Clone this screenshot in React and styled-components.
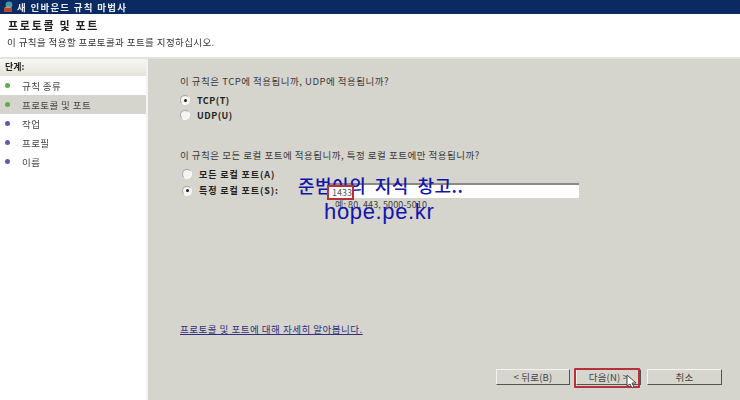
import React from 'react';
import styled, { createGlobalStyle } from 'styled-components';

const Global = createGlobalStyle`
  html, body { margin: 0; padding: 0; background: #fff; }
  body { font-family: "Noto Sans CJK KR", "Liberation Sans", sans-serif; font-size: 9px; color: #2c2c2c; }
`;

const Wizard = styled.div`
  width: 740px;
  height: 400px;
  display: flex;
  flex-direction: column;
  overflow: hidden;
  filter: blur(0.35px);
`;

const TitleBar = styled.div`
  height: 14px;
  background: #0c2a62;
  color: #e8ecf4;
  display: flex;
  align-items: center;
  gap: 3px;
  padding-left: 3px;
  font-size: 9.5px;
  font-weight: 700;
  letter-spacing: 1.25px;
`;

const Header = styled.div`
  height: 43px;
  padding: 3px 0 0 7px;
  background: #fff;
  box-sizing: border-box;
`;

const HeaderTitle = styled.div`
  font-size: 11px;
  font-weight: 700;
  line-height: 16px;
  letter-spacing: 1.7px;
  color: #222;
  margin-left: 1px;
`;

const HeaderSub = styled.div`
  font-size: 9.5px;
  line-height: 14px;
  margin-top: 2px;
  letter-spacing: 0.4px;
  color: #333;
`;

const Body = styled.div`
  flex: 1;
  display: flex;
  border-top: 2px solid #e4e2dc;
`;

const Side = styled.div`
  width: 146px;
  background: #fff;
  border-right: 2px solid #f4f3f0;
`;

const SideHead = styled.div`
  height: 17px;
  padding-left: 5px;
  background: linear-gradient(#f8f7f4, #e6e3dc);
  font-size: 9px;
  font-weight: 700;
  line-height: 15px;
  color: #222;
`;

const Steps = styled.div`
  display: flex;
  flex-direction: column;
`;

const Step = styled.div`
  height: 19px;
  display: flex;
  align-items: center;
  gap: 12px;
  padding-left: 5px;
  font-size: 9.5px;
  letter-spacing: 0.4px;
  color: #444;
  background: ${(p) => (p.$active ? '#d5d4cd' : 'transparent')};
`;

const Dot = styled.span`
  width: 5px;
  height: 5px;
  border-radius: 50%;
  background: ${(p) => (p.$done ? '#5cae4e' : '#5a5ea8')};
`;

const Main = styled.div`
  flex: 1;
  position: relative;
  background: #d5d4cd;
  padding: 15px 0 0 32px;
  display: flex;
  flex-direction: column;
`;

const Question = styled.div`
  font-size: 9.5px;
  line-height: 14px;
  letter-spacing: 0.5px;
  color: #3a3a3a;
  margin-top: ${(p) => p.$top || 0}px;
`;

const Options = styled.div`
  display: flex;
  flex-direction: column;
  gap: ${(p) => p.$gap || 1}px;
  margin: 5px 0 0 ${(p) => p.$indent || 0}px;
`;

const Option = styled.div`
  height: 14px;
  display: flex;
  align-items: center;
  gap: 7px;
  font-size: 9px;
  font-weight: 700;
  letter-spacing: ${(p) => (p.$wide ? 0.9 : 0.5)}px;
  color: #222;
`;

const Radio = styled.span`
  width: 8px;
  height: 8px;
  border-radius: 50%;
  background: #f4f4f2;
  border: 1px solid #a8a6a0;
  border-right-color: #fff;
  border-bottom-color: #fff;
  display: flex;
  align-items: center;
  justify-content: center;
  &::after {
    content: '';
    width: 3px;
    height: 3px;
    border-radius: 50%;
    background: ${(p) => (p.$on ? '#222' : 'transparent')};
  }
`;

const PortRow = styled.div`
  display: flex;
  align-items: center;
`;

const PortInput = styled.div`
  width: 250px;
  height: 15px;
  margin-left: 50px;
  box-sizing: border-box;
  background: #fff;
  border-top: 2px solid #8c8a84;
  border-left: 1px solid #8c8a84;
`;

const Example = styled.div`
  margin: 0 0 0 155px;
  font-size: 9px;
  line-height: 13px;
  letter-spacing: 0.1px;
  color: #444;
`;

const HelpLink = styled.div`
  margin-top: 111px;
  font-size: 9.5px;
  line-height: 14px;
  letter-spacing: 0.5px;
  color: #30307c;
  text-decoration: underline;
`;

const Buttons = styled.div`
  position: absolute;
  right: 18px;
  bottom: 15px;
  display: flex;
  gap: 6px;
`;

const Button = styled.div`
  width: ${(p) => p.$w}px;
  height: 16px;
  box-sizing: border-box;
  display: flex;
  align-items: center;
  justify-content: center;
  background: #d6d5ce;
  border: 1px solid;
  border-color: #f4f3f0 #55534e #55534e #f4f3f0;
  font-size: 9.5px;
  color: #444;
  letter-spacing: 0.2px;
`;

const RedBox = styled.div`
  position: absolute;
  border: 2px solid #b8303a;
  box-sizing: border-box;
`;

const PortMark = styled(RedBox)`
  left: 179px;
  top: 126px;
  width: 27px;
  height: 15px;
  background: #fff;
  padding-left: 3px;
  font-size: 9px;
  line-height: 11px;
  color: #555;
`;

const NextMark = styled(RedBox)`
  right: 100px;
  bottom: 12px;
  width: 66px;
  height: 20px;
  border-radius: 1px;
`;

const Cursor = styled.svg`
  position: absolute;
  right: 103px;
  bottom: 11px;
`;

const WatermarkTop = styled.div`
  position: absolute;
  left: 150px;
  top: 115px;
  font-size: 18px;
  line-height: 22px;
  font-weight: 500;
  letter-spacing: 0.5px;
  word-spacing: 4px;
  white-space: nowrap;
  color: #1414ac;
`;

const WatermarkUrl = styled.div`
  position: absolute;
  left: 176px;
  top: 141px;
  font-family: "Liberation Sans", sans-serif;
  font-size: 22px;
  line-height: 24px;
  letter-spacing: 0.65px;
  color: #1414ac;
`;

const AppIcon = () => (
  <svg width="11" height="12" viewBox="0 0 11 12">
    <circle cx="6" cy="4" r="3.4" fill="#3f9aa8" />
    <path d="M1 7h8v4H1z" fill="#b0483a" />
    <path d="M1 7l4-2 4 2z" fill="#d88a6a" />
  </svg>
);

const steps = [
  { label: '규칙 종류', done: true },
  { label: '프로토콜 및 포트', done: true, active: true },
  { label: '작업' },
  { label: '프로필' },
  { label: '이름' },
];

export default function App() {
  return (
    <Wizard>
      <Global />
      <TitleBar>
        <AppIcon />새 인바운드 규칙 마법사
      </TitleBar>
      <Header>
        <HeaderTitle>프로토콜 및 포트</HeaderTitle>
        <HeaderSub>이 규칙을 적용할 프로토콜과 포트를 지정하십시오.</HeaderSub>
      </Header>
      <Body>
        <Side>
          <SideHead>단계:</SideHead>
          <Steps>
            {steps.map((s) => (
              <Step key={s.label} $active={s.active}>
                <Dot $done={s.done} />
                {s.label}
              </Step>
            ))}
          </Steps>
        </Side>
        <Main>
          <Question>이 규칙은 TCP에 적용됩니까, UDP에 적용됩니까?</Question>
          <Options>
            <Option>
              <Radio $on />
              TCP(T)
            </Option>
            <Option>
              <Radio />
              UDP(U)
            </Option>
          </Options>
          <Question $top={26}>
            이 규칙은 모든 로컬 포트에 적용됩니까, 특정 로컬 포트에만 적용됩니까?
          </Question>
          <Options $indent={2} $gap={2}>
            <Option $wide>
              <Radio />
              모든 로컬 포트(A)
            </Option>
            <PortRow>
              <Option $wide>
                <Radio $on />
                특정 로컬 포트(S):
              </Option>
              <PortInput />
            </PortRow>
          </Options>
          <Example>예: 80, 443, 5000-5010</Example>
          <HelpLink>프로토콜 및 포트에 대해 자세히 알아봅니다.</HelpLink>
          <Buttons>
            <Button $w={74}>&lt; 뒤로(B)</Button>
            <Button $w={65}>다음(N) &gt;</Button>
            <Button $w={75}>취소</Button>
          </Buttons>
          <NextMark />
          <Cursor width="11" height="15" viewBox="0 0 11 15">
            <path d="M1 1v11l3-2 2 4 2-1-2-4h4z" fill="#fff" stroke="#444" />
          </Cursor>
          <WatermarkTop>준범이의 지식 창고..</WatermarkTop>
          <WatermarkUrl>hope.pe.kr</WatermarkUrl>
          <PortMark>1433</PortMark>
        </Main>
      </Body>
    </Wizard>
  );
}
